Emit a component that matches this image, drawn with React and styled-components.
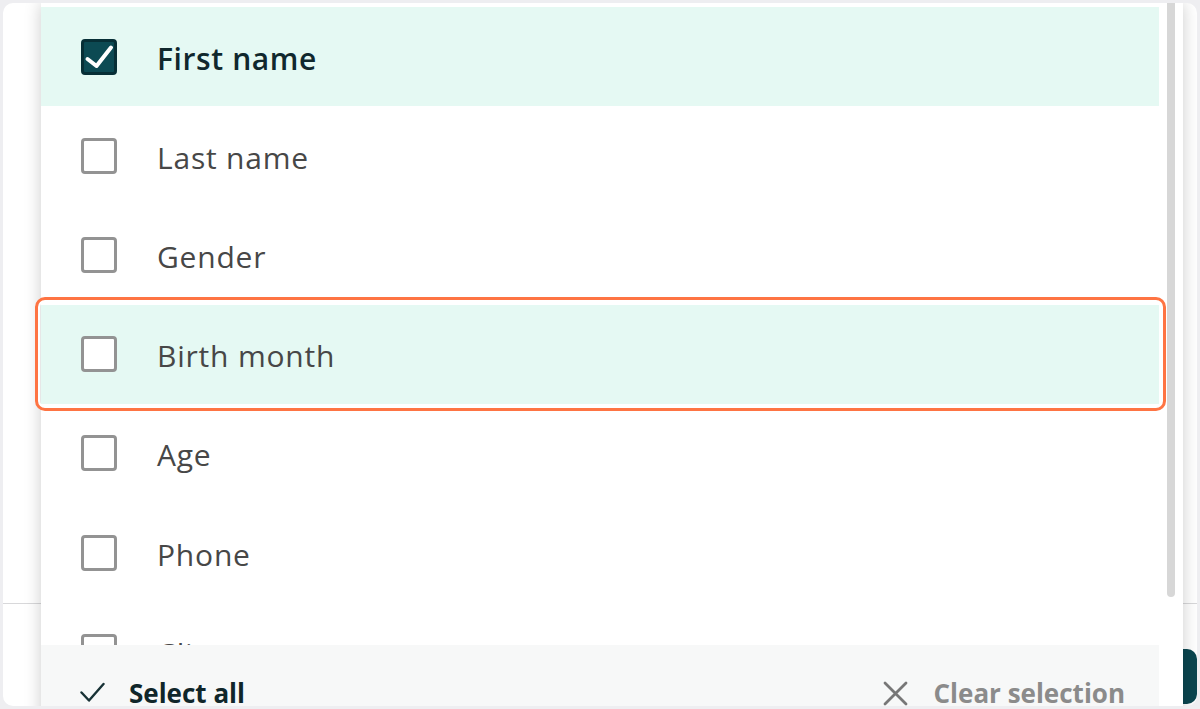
import React from "react";
import styled, { createGlobalStyle } from "styled-components";

const Global = createGlobalStyle`
  html, body { margin: 0; padding: 0; background: #eeeef1; }
  body { font-family: "Open Sans", "Noto Sans", sans-serif; }
  * { box-sizing: border-box; }
`;

const Page = styled.div`
  width: 1200px;
  height: 709px;
  padding: 3px;
  background: #eeeef1;
`;

const Screen = styled.div`
  position: relative;
  width: 100%;
  height: 100%;
  background: #fff;
  border-radius: 10px;
  overflow: hidden;
  display: flex;
  flex-direction: column;
`;

const BackContent = styled.div`
  height: 601px;
  border-bottom: 1px solid #d8d8da;
`;

const BackFooter = styled.div`
  flex: 1;
  display: flex;
  justify-content: flex-end;
  padding-top: 45px;
`;

const PrimaryButton = styled.div`
  width: 160px;
  height: 55px;
  border-radius: 10px;
  background: #0b4650;
`;

const Panel = styled.div`
  position: absolute;
  left: 38px;
  top: 0;
  width: 1142px;
  height: 740px;
  background: #fff;
  box-shadow: 0 0 16px rgba(0, 0, 0, 0.2);
  display: flex;
`;

const MainCol = styled.div`
  width: 1118px;
  display: flex;
  flex-direction: column;
`;

const List = styled.div`
  height: 642px;
  padding-top: 4px;
  overflow: hidden;
`;

const Row = styled.div`
  height: 99.2px;
  display: flex;
  align-items: center;
  padding-left: 40px;
  gap: 40px;
  background: ${(p) => (p.$active ? "#e5f9f3" : "#fff")};
`;

const Box = styled.span`
  width: 36px;
  height: 36px;
  flex: none;
  border-radius: 4px;
  border: 3px solid ${(p) => (p.$checked ? "#072f36" : "#939393")};
  background: ${(p) => (p.$checked ? "#0c4a53" : "#fff")};
  position: relative;
  display: flex;
  align-items: center;
  justify-content: center;
`;

const Label = styled.span`
  font-size: 30px;
  line-height: 1;
  padding-top: 4px;
  letter-spacing: ${(p) => (p.$bold ? "0.6px" : "0.8px")};
  color: ${(p) => (p.$bold ? "#10282d" : "#474747")};
  font-weight: ${(p) => (p.$bold ? 600 : 400)};
  white-space: nowrap;
`;

const Footer = styled.div`
  height: 96px;
  background: #f7f8f8;
  display: flex;
  align-items: center;
  justify-content: space-between;
  padding: 0 34px 0 39px;
`;

const FooterAction = styled.div`
  display: flex;
  align-items: center;
  gap: ${(p) => p.$gap}px;
  font-size: 26px;
  font-weight: 700;
  color: ${(p) => p.$color};
  white-space: nowrap;
`;

const Gutter = styled.div`
  width: 24px;
  padding-left: 8px;
`;

const Thumb = styled.div`
  width: 8px;
  height: 606px;
  margin-top: -12px;
  border-radius: 4px;
  background: #d7d7d7;
`;

const Highlight = styled.div`
  position: absolute;
  left: 32px;
  top: 294px;
  width: 1131px;
  height: 114px;
  border: 3px solid #fe7443;
  border-radius: 10px;
  box-shadow: inset 0 0 0 2px #fff;
  pointer-events: none;
`;

const items = [
  { label: "First name", checked: true, active: true },
  { label: "Last name" },
  { label: "Gender" },
  { label: "Birth month", active: true },
  { label: "Age" },
  { label: "Phone" },
  { label: "Client status" },
];

function Checkbox({ checked }) {
  return (
    <Box $checked={checked}>
      {checked && (
        <svg width="36" height="36" viewBox="0 0 36 36" style={{ position: "absolute", left: -3, top: -3 }}>
          <polyline
            points="6.5,20 15.5,27 30,8.5"
            fill="none"
            stroke="#fff"
            strokeWidth="4"
            strokeLinecap="round"
            strokeLinejoin="round"
          />
        </svg>
      )}
    </Box>
  );
}

export default function App() {
  return (
    <>
      <Global />
      <Page>
        <Screen>
          <BackContent />
          <BackFooter>
            <PrimaryButton />
          </BackFooter>
          <Panel>
            <MainCol>
              <List>
                {items.map((it) => (
                  <Row key={it.label} $active={it.active}>
                    <Checkbox checked={it.checked} />
                    <Label $bold={it.checked}>{it.label}</Label>
                  </Row>
                ))}
              </List>
              <Footer>
                <FooterAction $gap={24} $color="#10262a">
                  <svg width="25" height="22" viewBox="0 0 25 22">
                    <polyline
                      points="1.5,10.5 9,18.5 23.5,2"
                      fill="none"
                      stroke="#183236"
                      strokeWidth="2.4"
                      strokeLinecap="round"
                      strokeLinejoin="round"
                    />
                  </svg>
                  Select all
                </FooterAction>
                <FooterAction $gap={26} $color="#8b8b8b">
                  <svg width="25" height="25" viewBox="0 0 25 25">
                    <path d="M2 2 L23 23 M23 2 L2 23" stroke="#777" strokeWidth="2.8" strokeLinecap="round" />
                  </svg>
                  Clear selection
                </FooterAction>
              </Footer>
            </MainCol>
            <Gutter>
              <Thumb />
            </Gutter>
          </Panel>
          <Highlight />
        </Screen>
      </Page>
    </>
  );
}
